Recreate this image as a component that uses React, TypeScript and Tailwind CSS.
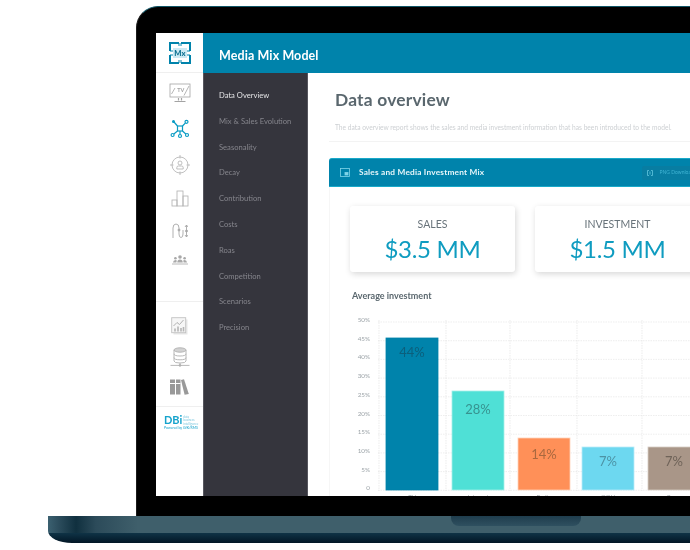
import React from 'react';

const navItems = [
  'Data Overview',
  'Mix & Sales Evolution',
  'Seasonality',
  'Decay',
  'Contribution',
  'Costs',
  'Roas',
  'Competition',
  'Scenarios',
  'Precision',
];

const yTicks = ['50%', '45%', '40%', '30%', '25%', '20%', '15%', '10%', '5%', '0'];

const bars = [
  { x: 28, top: 33, color: '#0083AB', edge: '#0083AB', label: '44%', text: '#0b5f7c', labelY: 51.5, cat: 'TV' },
  { x: 94, top: 86, color: '#4FE0D6', edge: '#a5efe9', label: '28%', text: '#37928f', labelY: 108.5, cat: 'Internet' },
  { x: 160, top: 133, color: '#FF9058', edge: '#ffd2ba', label: '14%', text: '#a9683f', labelY: 153.5, cat: 'Radio' },
  { x: 224, top: 142, color: '#6DD8F0', edge: '#b9ecf8', label: '7%', text: '#4d93a5', labelY: 160.5, cat: 'OOH' },
  { x: 290, top: 142, color: '#A99688', edge: '#d6ccc4', label: '7%', text: '#6f6359', labelY: 160.5, cat: 'Press' },
];

function TvIcon() {
  return (
    <svg width="22" height="20" viewBox="0 0 22 20" fill="none" stroke="#a3a3a3" strokeWidth="0.8">
      <rect x="1" y="1" width="20" height="13" />
      <path d="M2.5 11 L6 5 M15 12.5 L20 3" />
      <path d="M9.5 15 V17.5 M12.5 15 V17.5 M5.5 18.5 H16.5" strokeWidth="1.2" />
      <text x="8.2" y="8.8" fontSize="5.5" fontWeight="700" fill="#a3a3a3" stroke="none" fontFamily="Lato, sans-serif">TV</text>
    </svg>
  );
}

function NetworkIcon() {
  return (
    <svg width="20" height="20" viewBox="0 0 20 20" fill="none" stroke="#0a9cc4" strokeWidth="1.2">
      <rect x="7.5" y="7" width="5" height="5" />
      <path d="M7.5 7 L4 3 M12.5 7 L15.5 3.8 M7.5 12 L3.8 15 M12.5 12 L15.8 15 M10 12 V15.5" />
      <circle cx="3.5" cy="2.5" r="0.9" fill="#0a9cc4" />
      <circle cx="16.5" cy="2.8" r="1.5" />
      <circle cx="2.6" cy="16" r="1.5" />
      <circle cx="17" cy="16" r="1.5" />
      <circle cx="10" cy="17" r="1.5" />
    </svg>
  );
}

function TargetUserIcon() {
  return (
    <svg width="20" height="20" viewBox="0 0 20 20" fill="none" stroke="#b0b0b0" strokeWidth="0.8">
      <circle cx="10" cy="10" r="8" />
      <path d="M10 0 V3.5 M10 16.5 V20 M0 10 H3.5 M16.5 10 H20" />
      <circle cx="10" cy="8" r="2" />
      <path d="M6.8 14 V12.6 Q6.8 11 8.4 11 H11.6 Q13.2 11 13.2 12.6 V14 Z" />
    </svg>
  );
}

function BarsIcon() {
  return (
    <svg width="18" height="17" viewBox="0 0 18 17" fill="none" stroke="#b0b0b0" strokeWidth="0.8">
      <rect x="1" y="10" width="5" height="6" />
      <rect x="6" y="1" width="6" height="15" />
      <rect x="12" y="6" width="5" height="10" />
    </svg>
  );
}

function RoutesIcon() {
  return (
    <svg width="16" height="16" viewBox="0 0 16 16" fill="none" stroke="#a8a8a8" strokeWidth="0.9">
      <path d="M1 15 V5 Q1 1 4 1 Q7 1 7 5 V11 Q7 14.5 9 14.5 Q11 14.5 11 11 V7" />
      <path d="M14.5 2 V14" />
      <path d="M13 4 L14.5 2 L16 4 M13 12 L14.5 14 L16 12" />
      <circle cx="7" cy="7" r="1" fill="#a8a8a8" />
      <circle cx="14.5" cy="8" r="1" fill="#a8a8a8" />
    </svg>
  );
}

function PeopleIcon() {
  return (
    <svg width="16" height="10" viewBox="0 0 16 10" fill="#a8a8a8">
      <circle cx="8" cy="2" r="1.8" />
      <circle cx="3.4" cy="3.2" r="1.3" />
      <circle cx="12.6" cy="3.2" r="1.3" />
      <path d="M5.2 7.5 Q5.4 4.4 8 4.4 Q10.6 4.4 10.8 7.5 Z" />
      <path d="M1 7.5 Q1.2 5 3.4 5 Q4.4 5 4.8 5.6 L4.4 7.5 Z" />
      <path d="M15 7.5 Q14.8 5 12.6 5 Q11.6 5 11.2 5.6 L11.6 7.5 Z" />
      <rect x="0" y="8.6" width="16" height="0.8" />
    </svg>
  );
}

function ReportIcon() {
  return (
    <svg width="17" height="18" viewBox="0 0 17 18" fill="none" stroke="#c2c2c2" strokeWidth="0.9">
      <rect x="2.5" y="2.5" width="14" height="15" fill="#e8e8e8" stroke="none" />
      <rect x="0.7" y="0.7" width="14" height="15" fill="#f6f6f6" />
      <path d="M2.5 9 L6 5.5 L8.5 7.5 L12.5 3" stroke="#a8a8a8" />
      <path d="M4 14.5 V11.5 M7 14.5 V9.5 M10 14.5 V11 M12.5 14.5 V10" stroke="#b5b5b5" strokeWidth="1.6" />
    </svg>
  );
}

function DatabaseIcon() {
  return (
    <svg width="20" height="20" viewBox="0 0 20 20" fill="none" stroke="#b0b0b0" strokeWidth="0.9">
      <ellipse cx="10" cy="3" rx="6" ry="2.2" fill="#d2d2d2" />
      <path d="M4 3 V14 Q4 16 10 16 Q16 16 16 14 V3" />
      <path d="M4 6.8 Q4 9 10 9 Q16 9 16 6.8 M4 10.6 Q4 12.8 10 12.8 Q16 12.8 16 10.6" />
      <path d="M10 16 V18.4 M0.5 18.4 H19.5" />
      <circle cx="10" cy="18.4" r="0.9" fill="#b0b0b0" />
    </svg>
  );
}

function BooksIcon() {
  return (
    <svg width="19" height="16" viewBox="0 0 19 16" fill="#999999">
      <rect x="0" y="0.5" width="5" height="15" />
      <rect x="6" y="0.5" width="4.5" height="15" />
      <path d="M11 1 L14 0.3 L18.8 15 L14.6 15.8 Z" />
      <rect x="0" y="4" width="10.5" height="1" fill="#fff" />
    </svg>
  );
}

function MxLogo() {
  return (
    <svg width="22" height="22" viewBox="0 0 22 22" fill="none" stroke="#0083AB" strokeWidth="2">
      <path d="M1 9 V1 H10 M12 1 H21 V9 M21 13 V21 H12 M10 21 H1 V13" />
      <path d="M10 1 V4 M12 1 V4 M10 21 V18 M12 21 V18 M1 9 H4 M1 13 H4 M21 9 H18 M21 13 H18" strokeWidth="1" />
      <rect x="4" y="6" width="14" height="10" fill="#cdeaf3" stroke="none" />
      <text x="11" y="13.8" textAnchor="middle" fontSize="7.6" fontWeight="900" fill="#0a6f90" stroke="none" fontFamily="Lato, sans-serif">Mx</text>
    </svg>
  );
}

function InvestmentChart() {
  const gridXs = [21, 88, 152, 219, 284, 350];
  const gridYs = Array.from({ length: 10 }, (_, i) => 17 + i * 18.7);
  return (
    <svg width="350" height="194" viewBox="0 0 350 194" className="block" overflow="visible" fontFamily="Lato, sans-serif">
      {gridYs.map((y) => (
        <line key={y} x1="20" x2="360" y1={y} y2={y} stroke="#e6e6e6" strokeWidth="0.7" strokeDasharray="1.5 1" />
      ))}
      {gridXs.map((x) => (
        <line key={x} x1={x} x2={x} y1="15" y2="186" stroke="#e4e4e4" strokeWidth="0.7" strokeDasharray="1.5 1" />
      ))}
      {yTicks.map((t, i) => (
        <text key={t} x="12" y={17 + i * 18.7} fontSize="6.3" fill="#9ca3a8" textAnchor="end">
          {t}
        </text>
      ))}
      {bars.map((b) => (
        <g key={b.x}>
          <rect x={b.x} y={b.top} width="52" height={185 - b.top} fill={b.color} stroke={b.edge} strokeWidth="0.8" />
          <text x={b.x + 26} y={b.labelY} fontSize="13" fill={b.text} textAnchor="middle">
            {b.label}
          </text>
          <text x={b.x + 26} y="193.5" fontSize="6" fill="#9ca3a8" textAnchor="middle">
            {b.cat}
          </text>
        </g>
      ))}
    </svg>
  );
}

export default function App() {
  return (
    <div className="w-[690px] h-[550px] overflow-hidden bg-white flex flex-col font-['Lato',sans-serif]">
      {/* Laptop lid */}
      <div className="ml-[136px] mt-[6px] w-[554px] h-[510px] shrink-0 bg-black rounded-tl-[22px] border-t border-l border-t-[#0f5566] border-l-[#1a1a1a] pl-[19px] pt-[26px] pb-[20px]">
        <div className="flex h-[463px] w-[535px] overflow-hidden bg-white blur-[0.35px]">
          {/* Icon rail */}
          <aside className="w-[47px] shrink-0 flex flex-col items-center">
            <div className="h-[40px] w-full shrink-0 flex items-center justify-center border-b border-[#efefef]">
              <MxLogo />
            </div>
            <div className="flex flex-col items-center w-full pt-[10px] h-[228px] shrink-0">
              <div className="h-[20px] flex items-center"><TvIcon /></div>
              <div className="h-[20px] mt-[16px] flex items-center"><NetworkIcon /></div>
              <div className="h-[20px] mt-[16px] flex items-center"><TargetUserIcon /></div>
              <div className="h-[17px] mt-[15px] flex items-center"><BarsIcon /></div>
              <div className="h-[16px] mt-[16px] flex items-center"><RoutesIcon /></div>
              <div className="h-[10px] mt-[16px] flex items-center"><PeopleIcon /></div>
            </div>
            <div className="w-full border-t border-[#efefef] pt-[15px] h-[105px] shrink-0 flex flex-col items-center">
              <ReportIcon />
              <div className="mt-[12px]"><DatabaseIcon /></div>
              <div className="mt-[12px]"><BooksIcon /></div>
            </div>
            <div className="w-full border-t border-[#efefef] pt-[8px] pl-[8px]">
              <div className="flex items-start gap-[1px] leading-none">
                <span className="text-[11px] leading-[10px] font-bold text-[#15a3cc]">DBi</span>
                <span className="text-[3px] leading-[3.4px] text-[#7cc7de] mt-[1px]">
                  data
                  <br />
                  business
                  <br />
                  intelligence
                </span>
              </div>
              <div className="text-[3.5px] leading-[5px] text-[#15a3cc] whitespace-nowrap">Powered by GfK/RMS</div>
            </div>
          </aside>

          <div className="flex-1 min-w-0 flex flex-col">
            <header className="h-[40px] shrink-0 bg-[#0083AB] flex items-center pl-[16px] pt-[6px]">
              <h1 className="text-[12.5px] font-bold text-white tracking-[0.1px]">Media Mix Model</h1>
            </header>

            <div className="flex flex-1 min-h-0">
              {/* Section nav */}
              <nav className="w-[105px] shrink-0 bg-[#35353D] pl-[15px] pt-[16px] border-x border-[#8a8a90]/40">
                {navItems.map((item, i) => (
                  <div
                    key={item}
                    className={`h-[25.8px] text-[7.6px] leading-[12px] whitespace-nowrap ${i === 0 ? 'text-[#e4e4e6]' : 'text-[#85858c]'}`}
                  >
                    {item}
                  </div>
                ))}
              </nav>

              {/* Report */}
              <main className="flex-1 min-w-0 overflow-hidden pt-[16px]">
                <div className="pl-[27px]">
                  <h2 className="text-[17.4px] leading-[22px] font-bold text-[#5a676e] tracking-[0.2px]">Data overview</h2>
                  <p className="mt-[11px] text-[6.65px] leading-[10px] text-[#cdd0d3] whitespace-nowrap">
                    The data overview report shows the sales and media investment information that has been introduced to the model.
                  </p>
                </div>
                <div className="ml-[21px] mt-[9px] border-t border-[#f3f3f3]" />

                <section className="ml-[21px] mt-[16px] w-[400px]">
                  <div className="h-[29px] bg-[#0083AB] rounded-t-[3px] border-y border-[#18a9c9] flex items-center pl-[11px]">
                    <svg width="10" height="9" viewBox="0 0 10 9" fill="none" stroke="#7fd4e8" strokeWidth="0.8">
                      <rect x="0.5" y="0.5" width="9" height="8" />
                      <rect x="5" y="4.5" width="3" height="2.5" fill="#7fd4e8" />
                    </svg>
                    <span className="ml-[9px] text-[8.3px] font-bold text-[#e6f6fa] tracking-[0.2px] whitespace-nowrap">Sales and Media Investment Mix</span>
                    <div className="ml-[158px] h-[14px] w-[60px] shrink-0 rounded-[2px] bg-[#087da2] flex items-center pl-[5px] gap-[6px]">
                      <svg width="6" height="6" viewBox="0 0 6 6" fill="none" stroke="#6fd0e6" strokeWidth="0.7">
                        <path d="M0.5 0.5 H2 M0.5 0.5 V5.5 H2 M4 0.5 H5.5 V5.5 H4 M3 1.5 V4.5" />
                      </svg>
                      <span className="text-[5px] text-[#3fb4d4] whitespace-nowrap">PNG Download</span>
                    </div>
                  </div>

                  <div className="border-l border-[#f6f6f6] pl-[20px] pt-[19px]">
                    <div className="flex gap-[20px]">
                      <div className="w-[165px] h-[66px] shrink-0 rounded-[3px] bg-white shadow-[1px_2px_6px_rgba(0,0,0,0.16)] flex flex-col items-center pt-[11px]">
                        <span className="text-[10.5px] leading-[14px] text-[#68737a]">SALES</span>
                        <span className="mt-[3px] text-[24px] leading-[30px] tracking-[-0.3px] text-[#0f9cc0]">$3.5 MM</span>
                      </div>
                      <div className="w-[165px] h-[66px] shrink-0 rounded-[3px] bg-white shadow-[1px_2px_6px_rgba(0,0,0,0.16)] flex flex-col items-center pt-[11px]">
                        <span className="text-[10.5px] leading-[14px] text-[#68737a]">INVESTMENT</span>
                        <span className="mt-[3px] text-[24px] leading-[30px] tracking-[-0.3px] text-[#0f9cc0]">$1.5 MM</span>
                      </div>
                    </div>
                    <h3 className="mt-[18px] ml-[2px] text-[9px] leading-[12px] font-bold text-[#5a676e] whitespace-nowrap">Average investment</h3>
                    <div className="mt-[3px] ml-[8px]">
                      <InvestmentChart />
                    </div>
                  </div>
                </section>
              </main>
            </div>
          </div>
        </div>
      </div>

      {/* Laptop base */}
      <div className="ml-[48px] w-[642px] h-[27px] shrink-0 rounded-bl-[24px_12px] overflow-hidden flex flex-col">
        <div className="h-[17px] shrink-0 bg-[linear-gradient(90deg,#3b6070_0px,#2d4e5e_10px,#10303f_28px,#2c4b5a_48px,#3f5f6b_90px,#3f5f6b_100%)] pl-[403px]">
          <div className="w-[130px] h-[10px] rounded-b-[8px] bg-[linear-gradient(180deg,#1f3d4d,#2f5060)]" />
        </div>
        <div className="flex-1 bg-[linear-gradient(180deg,#0f3346,#021625)]" />
      </div>
    </div>
  );
}
